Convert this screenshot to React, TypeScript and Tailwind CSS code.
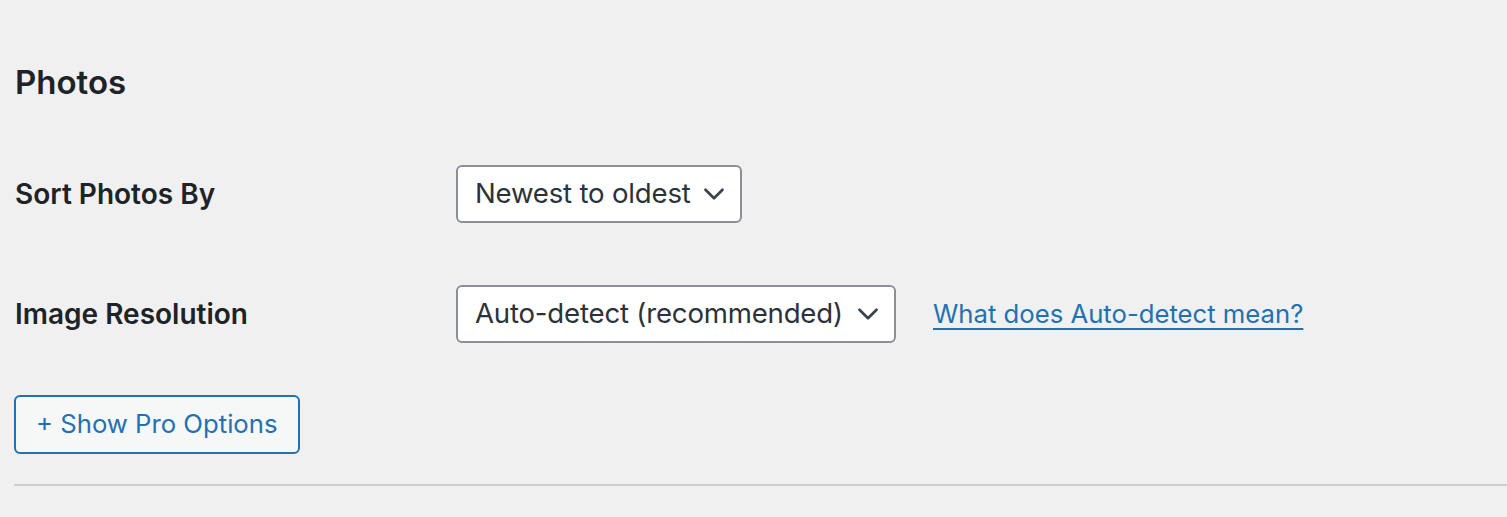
import { ChevronDown } from "lucide-react";

const font = { fontFamily: "Inter, 'Noto Sans', sans-serif" };

function Select({ value, width }: { value: string; width: string }) {
    return (
        <div className={`${width} h-[58px] flex items-center justify-between bg-white border-2 border-[#8c8f94] rounded-[6px] pl-[17px] pr-[9px]`}>
            <span className="text-[27.6px] text-[#2c3338] tracking-[-0.2px]">{value}</span>
            <ChevronDown size={34} strokeWidth={1.9} className="text-[#3c434a]" />
        </div>
    );
}

export default function App() {
    return (
        <div style={font} className="min-h-screen bg-[#f0f0f1] pl-[14px] pt-[62px]">
            <h2 className="text-[33px] leading-[40px] font-semibold text-[#1d2327] pl-[1px]">Photos</h2>

            <div className="flex items-center mt-[63px]">
                <div className="w-[442px] pl-[1px] text-[28px] font-semibold text-[#1d2327]">Sort Photos By</div>
                <Select value="Newest to oldest" width="w-[286px]" />
            </div>

            <div className="flex items-center mt-[62px]">
                <div className="w-[442px] pl-[1px] text-[28px] font-semibold text-[#1d2327]">Image Resolution</div>
                <Select value="Auto-detect (recommended)" width="w-[440px]" />
                <a href="#" className="ml-[37px] text-[25.7px] text-[#2271b1] underline underline-offset-[5px] decoration-2">
                    What does Auto-detect mean?
                </a>
            </div>

            <button className="mt-[52px] h-[59px] px-[20px] bg-[#f6f7f7] border-2 border-[#2271b1] rounded-[6px] text-[25.7px] text-[#2271b1]">
                + Show Pro Options
            </button>

            <div className="mt-[30px] h-[2px] bg-[#cfcfd1]" />
        </div>
    );
}
